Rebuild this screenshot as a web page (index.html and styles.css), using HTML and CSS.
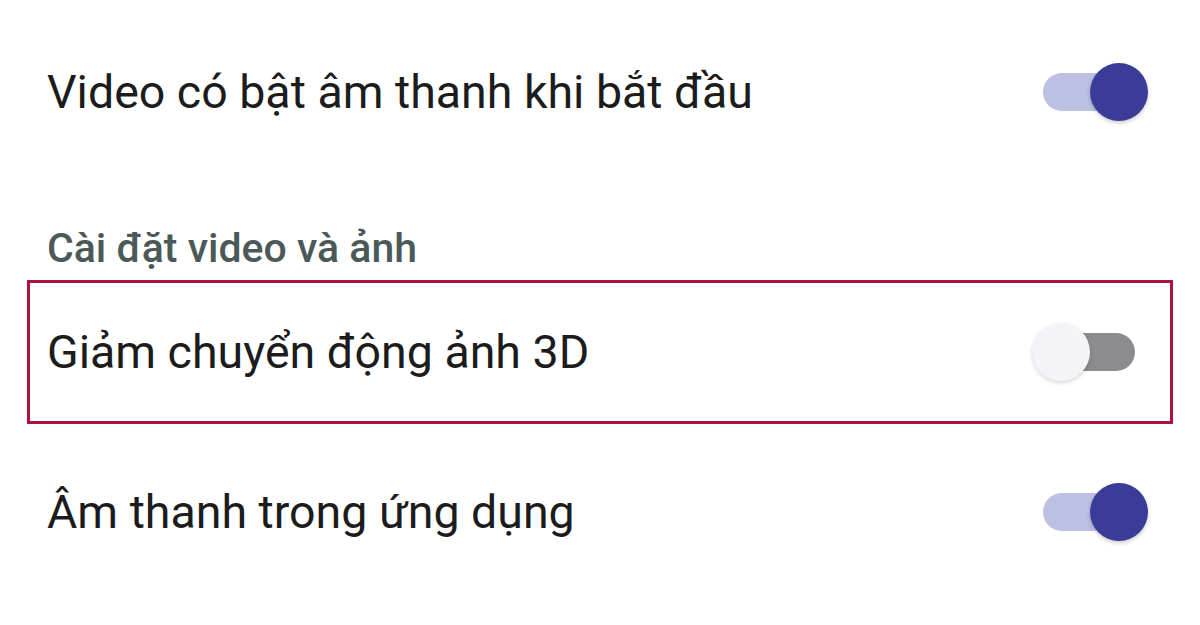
FILE: index.html
```html
<!DOCTYPE html>
<html lang="vi">
<head>
  <meta charset="UTF-8" />
  <title>Cài đặt</title>
  <link rel="stylesheet" href="styles.css">
</head>
<body>
  <div class="settings">
    <div class="row row-first">
      <span class="label">Video có bật âm thanh khi bắt đầu</span>
      <div class="toggle on"><span class="track"></span><span class="knob"></span></div>
    </div>

    <div class="section-title">Cài đặt video và ảnh</div>

    <div class="row row-boxed">
      <span class="label">Giảm chuyển động ảnh 3D</span>
      <div class="toggle"><span class="track"></span><span class="knob"></span></div>
    </div>

    <div class="row row-last">
      <span class="label">Âm thanh trong ứng dụng</span>
      <div class="toggle on"><span class="track"></span><span class="knob"></span></div>
    </div>
  </div>
</body>
</html>
```

FILE: styles.css
```css
* { box-sizing: border-box; }
body {
  margin: 0; padding: 0;
  background: #fff;
  font-family: Roboto, "Noto Sans", sans-serif;
  color: #1c1c1c;
  overflow: hidden;
}
.settings {
  display: flex; flex-direction: column;
  width: 1200px;
}
.row {
  display: flex; align-items: center; justify-content: space-between;
  padding: 0 52px 0 47px;
}
.row-first { height: 184px; }
.row-last { height: 176px; }
.row-boxed {
  height: 144px;
  margin: 0 27px;
  padding: 0 22px 0 17px;
  border: 3px solid #a8143f;
}
.label {
  font-size: 46.5px; line-height: 56px;
}
.section-title {
  padding: 40px 47px 8px;
  font-size: 41px; line-height: 48px;
  font-weight: 500;
  color: #4b5a58;
}
.toggle {
  position: relative;
  width: 116px; height: 58px;
  flex: none;
}
.toggle .track {
  position: absolute; left: 11px; top: 10px;
  width: 92px; height: 38px;
  border-radius: 19px;
  background: #8b8b90;
}
.toggle .knob {
  position: absolute; left: 0; top: 0;
  width: 58px; height: 58px;
  border-radius: 50%;
  background: #f4f4f8;
  box-shadow: 0 2px 4px rgba(0,0,0,0.15);
}
.toggle.on .track { background: #bcc0e2; }
.toggle.on .knob {
  left: 58px;
  background: #3a3c98;
  box-shadow: 0 2px 4px rgba(0,0,0,0.2);
}
```
